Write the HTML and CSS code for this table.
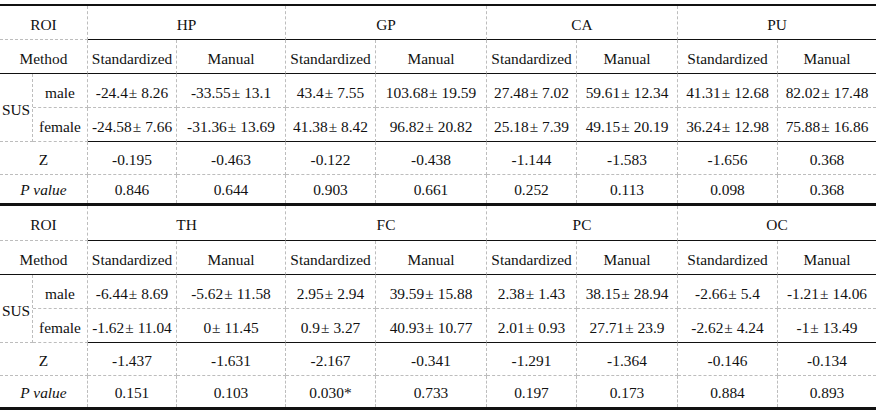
FILE: index.html
```html
<!DOCTYPE html>
<html lang="en">
<head>
<meta charset="utf-8">
<title>ROI comparison</title>
<link rel="stylesheet" href="styles.css">
</head>
<body>
<div class="tbl t1">
  <div class="c roi sp2 dr db">ROI</div>
  <div class="c sp2 dr sb">HP</div>
  <div class="c sp2 dr sb">GP</div>
  <div class="c sp2 dr sb">CA</div>
  <div class="c sp2 sb">PU</div>

  <div class="c sp2 dr sb">Method</div>
  <div class="c dr sb">Standardized</div><div class="c dr sb">Manual</div>
  <div class="c dr sb">Standardized</div><div class="c dr sb">Manual</div>
  <div class="c dr sb">Standardized</div><div class="c dr sb">Manual</div>
  <div class="c dr sb">Standardized</div><div class="c sb">Manual</div>

  <div class="c sus dr db">SUS</div>
  <div class="c dr db">male</div>
  <div class="c dr db">-24.4<span class="pm">±</span>8.26</div>
  <div class="c dr db">-33.55<span class="pm">±</span>13.1</div>
  <div class="c dr db">43.4<span class="pm">±</span>7.55</div>
  <div class="c dr db">103.68<span class="pm">±</span>19.59</div>
  <div class="c dr db">27.48<span class="pm">±</span>7.02</div>
  <div class="c dr db">59.61<span class="pm">±</span>12.34</div>
  <div class="c dr db">41.31<span class="pm">±</span>12.68</div>
  <div class="c db">82.02<span class="pm">±</span>17.48</div>

  <div class="c dr db">female</div>
  <div class="c dr sb">-24.58<span class="pm">±</span>7.66</div>
  <div class="c dr sb">-31.36<span class="pm">±</span>13.69</div>
  <div class="c dr sb">41.38<span class="pm">±</span>8.42</div>
  <div class="c dr sb">96.82<span class="pm">±</span>20.82</div>
  <div class="c dr sb">25.18<span class="pm">±</span>7.39</div>
  <div class="c dr sb">49.15<span class="pm">±</span>20.19</div>
  <div class="c dr sb">36.24<span class="pm">±</span>12.98</div>
  <div class="c sb">75.88<span class="pm">±</span>16.86</div>

  <div class="c sp2 dr db">Z</div>
  <div class="c dr db">-0.195</div><div class="c dr db">-0.463</div>
  <div class="c dr db">-0.122</div><div class="c dr db">-0.438</div>
  <div class="c dr db">-1.144</div><div class="c dr db">-1.583</div>
  <div class="c dr db">-1.656</div><div class="c db">0.368</div>

  <div class="c sp2 dr pv"><i>P value</i></div>
  <div class="c dr pv">0.846</div><div class="c dr pv">0.644</div>
  <div class="c dr pv">0.903</div><div class="c dr pv">0.661</div>
  <div class="c dr pv">0.252</div><div class="c dr pv">0.113</div>
  <div class="c dr pv">0.098</div><div class="c pv">0.368</div>
</div>

<div class="tbl t2">
  <div class="c roi sp2 dr db">ROI</div>
  <div class="c sp2 dr sb">TH</div>
  <div class="c sp2 dr sb">FC</div>
  <div class="c sp2 dr sb">PC</div>
  <div class="c sp2 sb">OC</div>

  <div class="c sp2 dr sb">Method</div>
  <div class="c dr sb">Standardized</div><div class="c dr sb">Manual</div>
  <div class="c dr sb">Standardized</div><div class="c dr sb">Manual</div>
  <div class="c dr sb">Standardized</div><div class="c dr sb">Manual</div>
  <div class="c dr sb">Standardized</div><div class="c sb">Manual</div>

  <div class="c sus dr db">SUS</div>
  <div class="c dr db">male</div>
  <div class="c dr db">-6.44<span class="pm">±</span>8.69</div>
  <div class="c dr db">-5.62<span class="pm">±</span>11.58</div>
  <div class="c dr db">2.95<span class="pm">±</span>2.94</div>
  <div class="c dr db">39.59<span class="pm">±</span>15.88</div>
  <div class="c dr db">2.38<span class="pm">±</span>1.43</div>
  <div class="c dr db">38.15<span class="pm">±</span>28.94</div>
  <div class="c dr db">-2.66<span class="pm">±</span>5.4</div>
  <div class="c db">-1.21<span class="pm">±</span>14.06</div>

  <div class="c dr db">female</div>
  <div class="c dr sb">-1.62<span class="pm">±</span>11.04</div>
  <div class="c dr sb">0<span class="pm">±</span>11.45</div>
  <div class="c dr sb">0.9<span class="pm">±</span>3.27</div>
  <div class="c dr sb">40.93<span class="pm">±</span>10.77</div>
  <div class="c dr sb">2.01<span class="pm">±</span>0.93</div>
  <div class="c dr sb">27.71<span class="pm">±</span>23.9</div>
  <div class="c dr sb">-2.62<span class="pm">±</span>4.24</div>
  <div class="c sb">-1<span class="pm">±</span>13.49</div>

  <div class="c sp2 dr db">Z</div>
  <div class="c dr db">-1.437</div><div class="c dr db">-1.631</div>
  <div class="c dr db">-2.167</div><div class="c dr db">-0.341</div>
  <div class="c dr db">-1.291</div><div class="c dr db">-1.364</div>
  <div class="c dr db">-0.146</div><div class="c db">-0.134</div>

  <div class="c sp2 dr pv"><i>P value</i></div>
  <div class="c dr pv">0.151</div><div class="c dr pv">0.103</div>
  <div class="c dr pv">0.030*</div><div class="c dr pv">0.733</div>
  <div class="c dr pv">0.197</div><div class="c dr pv">0.173</div>
  <div class="c dr pv">0.884</div><div class="c pv">0.893</div>
</div>
</body>
</html>
```

FILE: styles.css
```css
html, body {
  margin: 0;
  padding: 0;
  background: #fff;
}

body {
  padding-top: 4px;
  color: #111;
}

.tbl {
  display: grid;
  width: 876px;
  grid-template-columns: 33px 55px 89px 109px 90px 111px 90px 101px 100px 98px;
  font-family: "Liberation Serif", "Times New Roman", Tinos, "DejaVu Serif", serif;
  font-size: 15.4px;
}

.t1 {
  border-top: 2px solid #111;
  border-bottom: 3px solid #111;
  grid-template-rows: 34px 34px 34px 34px 33px 28px;
}

.t2 {
  border-bottom: 3px solid #111;
  grid-template-rows: 35px 34px 34px 34px 33px 31px;
}

.c {
  box-sizing: border-box;
  display: flex;
  align-items: center;
  justify-content: center;
  padding-top: 4px;
  white-space: nowrap;
  font-family: "Liberation Serif", "Times New Roman", serif;
}

.sp2 { grid-column: span 2; }
.sus { grid-row: span 2; }

.dr { border-right: 1px dashed #bdbdbd; }
.db { border-bottom: 1px dashed #bdbdbd; }
.sb { border-bottom: 1px solid #111; }

.pv { padding-top: 2px; }

.pm {
  margin: 0 4px 0 1px;
}
```
